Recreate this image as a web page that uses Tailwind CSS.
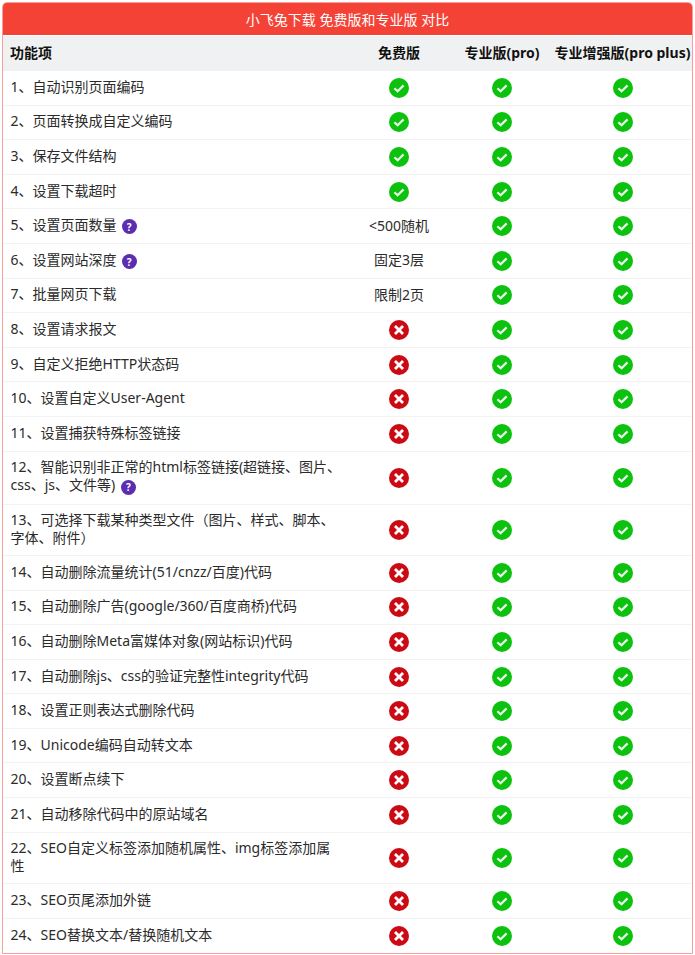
<!doctype html>
<html lang="zh-CN"><head><meta charset="utf-8"><script src="https://cdn.jsdelivr.net/npm/@tailwindcss/browser@4"></script></head>
<body class="bg-white font-['Noto_Sans','Noto_Sans_CJK_SC',sans-serif] text-[14px] text-[#2b2b2b] overflow-hidden">
<svg class="hidden"><defs>
<symbol id="ok" viewBox="0 0 20 20"><circle cx="10" cy="10" r="10" fill="#0cc20f"/><path d="M5.4 10.2l3.2 3 6-5.8" fill="none" stroke="#e8fbe8" stroke-width="2.2"/></symbol>
<symbol id="no" viewBox="0 0 20 20"><circle cx="10" cy="10" r="10" fill="#cb0a14"/><path d="M6 6l8 8M14 6l-8 8" fill="none" stroke="#fff" stroke-width="2.8"/></symbol>
</defs></svg>
<div class="mx-[2px] mt-[2px] h-[952px] rounded-t-[5px] border border-[#f5a19a] overflow-hidden">
<div class="h-[32px] bg-[#f44336] text-white flex items-center justify-center">小飞兔下载 免费版和专业版 对比</div>
<div class="mt-px h-[35px] pb-0.5 bg-[#f0f1f2] font-bold text-[#111] grid grid-cols-[344px_104px_102px_1fr] items-center text-center"><div class="pl-[7px] text-left">功能项</div><div>免费版</div><div>专业版(pro)</div><div class="whitespace-nowrap">专业增强版(pro plus)</div></div>
<div class="[&>div]:grid [&>div]:grid-cols-[344px_104px_102px_1fr] [&>div]:items-center [&>div]:justify-items-center [&>div]:border-b [&>div]:border-[#f3f3f3] [&>div]:h-[34.6px] [&>div>svg]:size-5 [&>div>span]:pb-0.5 [&>div>div:first-child]:justify-self-stretch [&>div>div:first-child]:pl-[7.5px] [&>div>div:first-child]:pr-[4.5px] [&>div>div:first-child]:pb-0.5 [&>div>div:first-child]:leading-[18px]">
<div><div>1、自动识别页面编码</div><svg><use href="#ok"/></svg><svg><use href="#ok"/></svg><svg><use href="#ok"/></svg></div>
<div><div>2、页面转换成自定义编码</div><svg><use href="#ok"/></svg><svg><use href="#ok"/></svg><svg><use href="#ok"/></svg></div>
<div><div>3、保存文件结构</div><svg><use href="#ok"/></svg><svg><use href="#ok"/></svg><svg><use href="#ok"/></svg></div>
<div><div>4、设置下载超时</div><svg><use href="#ok"/></svg><svg><use href="#ok"/></svg><svg><use href="#ok"/></svg></div>
<div><div>5、设置页面数量 <span class="inline-flex size-[15px] rounded-full bg-[#5b2db0] text-white text-[10px] font-bold items-center justify-center ml-[1.5px] align-[-1px]">?</span></div><span>&lt;500随机</span><svg><use href="#ok"/></svg><svg><use href="#ok"/></svg></div>
<div><div>6、设置网站深度 <span class="inline-flex size-[15px] rounded-full bg-[#5b2db0] text-white text-[10px] font-bold items-center justify-center ml-[1.5px] align-[-1px]">?</span></div><span>固定3层</span><svg><use href="#ok"/></svg><svg><use href="#ok"/></svg></div>
<div><div>7、批量网页下载</div><span>限制2页</span><svg><use href="#ok"/></svg><svg><use href="#ok"/></svg></div>
<div><div>8、设置请求报文</div><svg><use href="#no"/></svg><svg><use href="#ok"/></svg><svg><use href="#ok"/></svg></div>
<div><div>9、自定义拒绝HTTP状态码</div><svg><use href="#no"/></svg><svg><use href="#ok"/></svg><svg><use href="#ok"/></svg></div>
<div><div>10、设置自定义User-Agent</div><svg><use href="#no"/></svg><svg><use href="#ok"/></svg><svg><use href="#ok"/></svg></div>
<div><div>11、设置捕获特殊标签链接</div><svg><use href="#no"/></svg><svg><use href="#ok"/></svg><svg><use href="#ok"/></svg></div>
<div class="!h-[53px]"><div>12、智能识别非正常的html标签链接(超链接、图片、css、js、文件等) <span class="inline-flex size-[15px] rounded-full bg-[#5b2db0] text-white text-[10px] font-bold items-center justify-center ml-[2px] align-[-1px]">?</span></div><svg><use href="#no"/></svg><svg><use href="#ok"/></svg><svg><use href="#ok"/></svg></div>
<div class="!h-[51.4px]"><div>13、可选择下载某种类型文件（图片、样式、脚本、字体、附件）</div><svg><use href="#no"/></svg><svg><use href="#ok"/></svg><svg><use href="#ok"/></svg></div>
<div><div>14、自动删除流量统计(51/cnzz/百度)代码</div><svg><use href="#no"/></svg><svg><use href="#ok"/></svg><svg><use href="#ok"/></svg></div>
<div><div>15、自动删除广告(google/360/百度商桥)代码</div><svg><use href="#no"/></svg><svg><use href="#ok"/></svg><svg><use href="#ok"/></svg></div>
<div><div>16、自动删除Meta富媒体对象(网站标识)代码</div><svg><use href="#no"/></svg><svg><use href="#ok"/></svg><svg><use href="#ok"/></svg></div>
<div><div>17、自动删除js、css的验证完整性integrity代码</div><svg><use href="#no"/></svg><svg><use href="#ok"/></svg><svg><use href="#ok"/></svg></div>
<div><div>18、设置正则表达式删除代码</div><svg><use href="#no"/></svg><svg><use href="#ok"/></svg><svg><use href="#ok"/></svg></div>
<div><div>19、Unicode编码自动转文本</div><svg><use href="#no"/></svg><svg><use href="#ok"/></svg><svg><use href="#ok"/></svg></div>
<div><div>20、设置断点续下</div><svg><use href="#no"/></svg><svg><use href="#ok"/></svg><svg><use href="#ok"/></svg></div>
<div><div>21、自动移除代码中的原站域名</div><svg><use href="#no"/></svg><svg><use href="#ok"/></svg><svg><use href="#ok"/></svg></div>
<div class="!h-[51.4px]"><div>22、SEO自定义标签添加随机属性、img标签添加属性</div><svg><use href="#no"/></svg><svg><use href="#ok"/></svg><svg><use href="#ok"/></svg></div>
<div><div>23、SEO页尾添加外链</div><svg><use href="#no"/></svg><svg><use href="#ok"/></svg><svg><use href="#ok"/></svg></div>
<div class="!border-b-0"><div>24、SEO替换文本/替换随机文本</div><svg><use href="#no"/></svg><svg><use href="#ok"/></svg><svg><use href="#ok"/></svg></div>
</div>
</div>
</body></html>
